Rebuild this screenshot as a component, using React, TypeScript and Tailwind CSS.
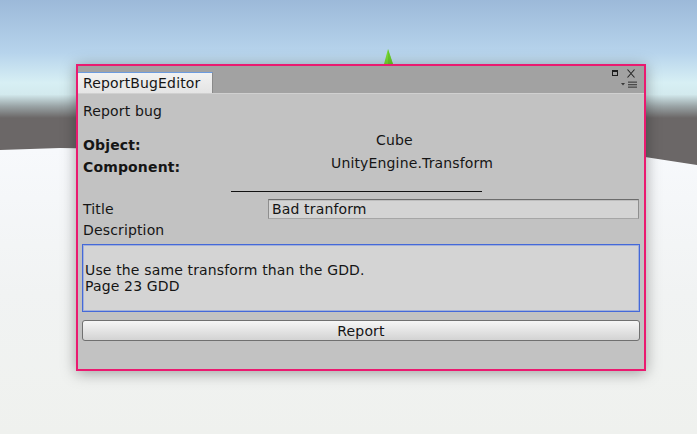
import React from 'react';

// Unity scene view behind the floating editor window
const SceneBackdrop: React.FC = () => (
    <svg className="absolute inset-0" width={697} height={434} viewBox="0 0 697 434">
        <defs>
            <linearGradient id="sky" x1="0" y1="0" x2="0" y2="118" gradientUnits="userSpaceOnUse">
                <stop offset="0" stopColor="#9cb9d9" />
                <stop offset="0.45" stopColor="#b7d4ec" />
                <stop offset="0.7" stopColor="#d7eff4" />
                <stop offset="0.8" stopColor="#d3eaee" />
                <stop offset="0.9" stopColor="#9aa4a6" />
                <stop offset="1" stopColor="#6b6767" />
            </linearGradient>
            <linearGradient id="ground" x1="0" y1="150" x2="0" y2="434" gradientUnits="userSpaceOnUse">
                <stop offset="0" stopColor="#f7f9fc" />
                <stop offset="0.5" stopColor="#f1f3f3" />
                <stop offset="1" stopColor="#eff1ee" />
            </linearGradient>
        </defs>
        <rect x="0" y="0" width="697" height="170" fill="url(#sky)" />
        <rect x="0" y="118" width="697" height="52" fill="#6b6767" />
        <polygon points="0,150 60,148 645,157 697,165 697,434 0,434" fill="url(#ground)" />
        {/* gizmo cone */}
        <polygon points="388,49 384,64 393,64" fill="#78d934" />
        <polygon points="388,49 388,64 393,64" fill="#5fc023" opacity="0.6" />
    </svg>
);

// maximize / close / pane menu glyphs in the top right of the tab strip
const TabIcons: React.FC = () => (
    <svg className="absolute right-[6px] top-0" width={28} height={24} viewBox="0 0 28 24">
        <rect x="2.5" y="4.5" width="5" height="5" fill="none" stroke="#1e1e1e" strokeWidth="1" />
        <rect x="2" y="4" width="6" height="2" fill="#1e1e1e" />
        <path d="M17.5 3.5 L24.5 11.5 M24.5 3.5 L17.5 11.5" stroke="#262626" strokeWidth="1.1" />
        <polygon points="11,17 15,17 13,19.5" fill="#3a3a3a" />
        <rect x="18" y="15.5" width="9" height="1.3" fill="#4a4a4a" />
        <rect x="18" y="18" width="9" height="1.3" fill="#4a4a4a" />
        <rect x="18" y="20.5" width="9" height="1.3" fill="#4a4a4a" />
    </svg>
);

export default function App() {
    return (
        <div className="relative w-[697px] h-[434px] overflow-hidden font-['DejaVu_Sans',sans-serif] text-[14px] tracking-[0.15px] text-[#151515]">
            <SceneBackdrop />

            <div className="absolute left-[76px] top-[64px] w-[570px] h-[307px] border-2 border-[#ea1a70] bg-[#c2c2c2] shadow-[0_2px_14px_rgba(0,0,0,0.35)] flex flex-col">
                {/* Tab strip */}
                <div className="relative h-[28px] shrink-0 bg-[#a2a2a2] border-b border-[#d0d0d0] flex items-end">
                    <div className="h-[21px] w-[135px] flex items-center pl-[5px] bg-gradient-to-b from-[#f2f2f2] to-[#e4e4e4] border-t border-[#6b9be0] border-r border-r-[#8a8a8a] leading-none">
                        ReportBugEditor
                    </div>
                    <TabIcons />
                </div>

                {/* Body */}
                <div className="flex-1 flex flex-col px-1 leading-none">
                    <div className="mt-[7px] h-[20px] flex items-center pl-px">Report bug</div>

                    <div className="mt-[9px] flex">
                        <div className="w-[249px] pt-[5px] pl-px flex flex-col gap-[2px] font-bold">
                            <div className="h-[20px] flex items-center">Object:</div>
                            <div className="h-[20px] flex items-center">Component:</div>
                        </div>
                        <div className="flex flex-col gap-[3px]">
                            <div className="h-[20px] flex items-center pl-[45px]">Cube</div>
                            <div className="h-[20px] flex items-center">UnityEngine.Transform</div>
                        </div>
                    </div>

                    <div className="mt-[14px] ml-[149px] w-[251px] h-px bg-[#111]" />

                    <div className="mt-[7px] h-[20px] flex items-center">
                        <div className="w-[186px] pl-px">Title</div>
                        <div className="flex-1 mr-px h-[20px] flex items-center pl-[3px] bg-[#d4d4d4] border border-[#8e8e8e] border-t-[#6c6c6c] border-b-[#a6a6a6] shadow-[inset_0_1px_0_#bdbdbd]">
                            Bad tranform
                        </div>
                    </div>

                    <div className="mt-px h-[20px] flex items-center pl-px">Description</div>

                    <div className="mt-[4px] h-[68px] bg-[#d4d4d4] border border-[#4469d9] shadow-[inset_0_0_0_1px_#a3b0d8] pt-[17px] pl-[2px] leading-[16px]">
                        <div>Use the same transform than the GDD.</div>
                        <div>Page 23 GDD</div>
                    </div>

                    <button className="mt-[8px] h-[21px] w-full rounded-[3px] border border-[#707070] bg-gradient-to-b from-[#f6f6f6] to-[#d3d3d3] flex items-center justify-center leading-none text-[#151515]">
                        Report
                    </button>
                </div>
            </div>
        </div>
    );
}
